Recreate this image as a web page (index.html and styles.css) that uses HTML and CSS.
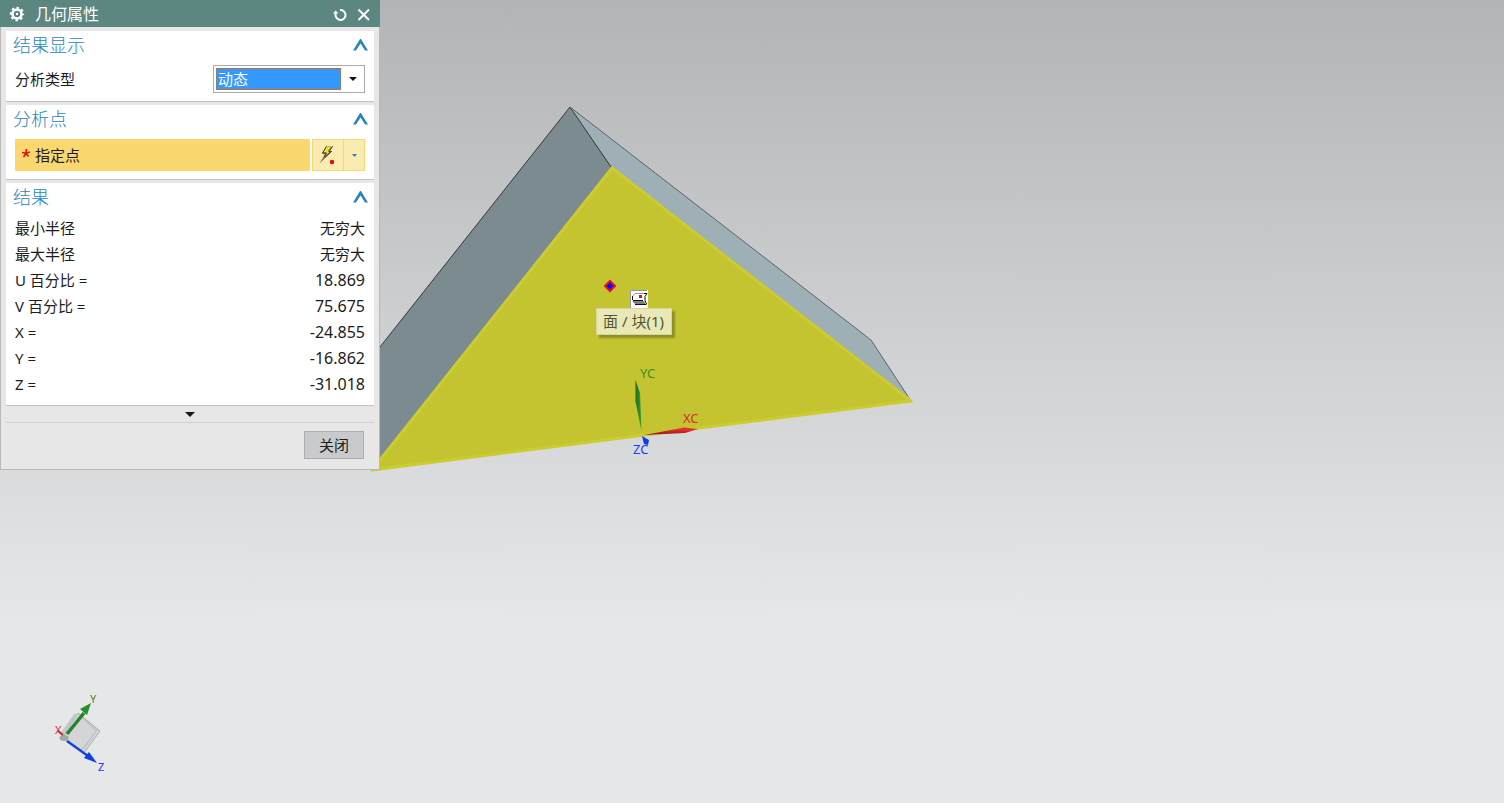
FILE: index.html
```
<!DOCTYPE html>
<html lang="zh-CN">
<head>
<meta charset="utf-8">
<title>几何属性</title>
<link rel="stylesheet" href="styles.css">
</head>
<body>
<main class="viewport">
  <svg class="scene" role="img" aria-label="块(1)">
    <defs>
      <linearGradient id="red" x1="0" y1="0" x2="0" y2="1"><stop offset=".3" stop-color="#e53030"/><stop offset="1" stop-color="#8c1515"/></linearGradient>
      <linearGradient id="green" x1="0" y1="0" x2="1" y2="0"><stop offset="0" stop-color="#1d6a1f"/><stop offset="1" stop-color="#35a035"/></linearGradient>
    </defs>
    <path d="M570 107 353 381 372 470 612 167Z" fill="#7c8b8f"/>
    <path d="M570 107 871 340 911 401 612 167Z" fill="#9fafb6"/>
    <path d="M353 381 570 107 611 167" fill="none" stroke="#333a3c"/>
    <path d="M570 107 871 340 911 401" fill="none" stroke="#59666a"/>
    <path d="M612 168 911 401 372 470Z" fill="#c4c430" stroke="#cccc30" stroke-width="3" stroke-linejoin="round"/>

    <path d="M610 281 615 286 610 291 605 286Z" fill="#00f" stroke="#e8101c" stroke-width="2"/>

    <path d="M635.500 380 640 393 641.500 431 635.500 401Z" fill="url(#green)"/>
    <path d="M644 435 684 427.500 698 429 685 433Z" fill="url(#red)"/>
    <path d="M642 436 649 440 648 445 644 444Z" fill="#0b3fe0"/>
    <text class="axis axis-y" x="640" y="378">YC</text>
    <text class="axis axis-x" x="683" y="423">XC</text>
    <text class="axis axis-z" x="633" y="454">ZC</text>

    <g stroke-linejoin="round">
      <path d="M78 713 100 731 84 753 62 738Z" fill="#d3d5d6" stroke="#aaacae"/>
      <path d="M81 717 97 731M97 730 82 750" stroke="#b2b4b6" fill="none"/>
      <path d="M76 714 61 735" stroke="#c4c6c8" stroke-width="3"/>
      <ellipse cx="64" cy="738" rx="4.500" ry="3" fill="#a4a6a8"/>
      <path d="M58 731 63 735" stroke="#c02020" stroke-width="2"/>
      <path d="M67 734 84 713" stroke="#23852a" stroke-width="3.500"/>
      <path d="M91 703 80 709 87 715Z" fill="#23902a"/>
      <path d="M67 741 88 756" stroke="#1245d4" stroke-width="2.500"/>
      <path d="M97 763 84 758 89 752Z" fill="#0b3fe8"/>
    </g>
    <text class="tiny axis-y" x="90" y="703">Y</text>
    <text class="tiny axis-x" x="55" y="734">X</text>
    <text class="tiny axis-z" x="98" y="771">Z</text>
  </svg>

  <svg class="face-icon" width="18" height="18" viewBox="0 0 18 18" aria-hidden="true">
    <path d="M0 0H18V18H0Z" fill="#fff"/><path d="M.5 18V.5H17" fill="none" stroke="#999"/>
    <path d="M2 11H14L15.500 14H5Z" fill="#808080"/>
    <path d="M2.500 6.500 5 3.500H14" fill="none" stroke="#999"/>
    <path d="M2.500 6V10M3 10.500H13M5 14.500H16.500M14 3.500H17L15 6.500V10.500L16.500 14" fill="none" stroke="#111"/>
    <path d="M9 5H12V8H9Z" fill="#c81818"/>
  </svg>
  <div class="tooltip" role="tooltip">面 / 块(1)</div>

  <form class="dialog" aria-labelledby="dialog-title">
    <header class="titlebar">
      <svg width="16" height="16" viewBox="0 0 16 16" aria-hidden="true">
        <circle cx="8" cy="8" r="4.500" fill="none" stroke="#fff" stroke-width="2.600"/>
        <circle cx="8" cy="8" r="6.200" fill="none" stroke="#fff" stroke-width="2" stroke-dasharray="2.435" stroke-dashoffset="1.217"/>
        <circle cx="8" cy="8" r="1.200" fill="#fff"/>
      </svg>
      <h1 class="title" id="dialog-title">几何属性</h1>
      <button class="tool" type="button" aria-label="重置">
        <svg width="14" height="14" viewBox="0 0 14 14"><path d="M2.500 5.500V8A5 5 0 1 0 7 3" fill="none" stroke="#fff" stroke-width="2"/><path d="M0 6.500 2.500 3.500 5.500 6.500Z" fill="#fff"/></svg>
      </button>
      <button class="tool" type="button" aria-label="关闭对话框">
        <svg width="14" height="14" viewBox="0 0 14 14"><path d="M1.500 2.500 12 13M12 2.500 1.500 13" stroke="#fff" stroke-width="2"/></svg>
      </button>
    </header>

    <div class="content">
      <section class="group">
        <div class="group-head">
          <h2 class="group-title">结果显示</h2>
          <button class="fold" type="button" aria-label="折叠结果显示"><svg width="16" height="12" viewBox="0 0 16 12"><path d="M0 11.500 7 0H8L15 11.500H12L7.500 4.500 3 11.500Z" fill="#2a86b8"/></svg></button>
        </div>
        <div class="row">
          <label for="kind">分析类型</label>
          <div class="combo">
            <select id="kind" class="combo-select"><option>动态</option></select>
            <svg class="combo-arrow" width="8" height="4" viewBox="0 0 8 4" aria-hidden="true"><path d="M0 0H8L4 4Z" fill="#111"/></svg>
          </div>
        </div>
      </section>

      <section class="group">
        <div class="group-head">
          <h2 class="group-title">分析点</h2>
          <button class="fold" type="button" aria-label="折叠分析点"><svg width="16" height="12" viewBox="0 0 16 12"><path d="M0 11.500 7 0H8L15 11.500H12L7.500 4.500 3 11.500Z" fill="#2a86b8"/></svg></button>
        </div>
        <div class="point">
          <button class="point-field" type="button"><svg width="8" height="12" viewBox="0 0 8 12" aria-hidden="true"><path d="M4.500 0 4 4.500 8 3M4 4.500 0 3.500M4 4.500 1.500 8M4 4.500 6.500 7.500" fill="none" stroke="#e01010" stroke-width="1.600"/></svg>指定点</button>
          <div class="point-tools">
            <button class="point-pick" type="button" aria-label="自动判断的点">
              <svg width="20" height="20" viewBox="0 0 20 20"><path d="M8 1.500H15L11.500 6H14L8 12 1.500 18.500 7 9H4Z" fill="#77705a"/><path d="M8.500 2H13L9.500 6.500H12L8 10 9 7.500H5.500Z" fill="#f4e52c"/><path d="M8.500 1.500 4.500 8H8L6.500 11.500M14.500 1.500 11 6.500H13.500L7 12.500" fill="none" stroke="#4b4728"/><circle cx="14" cy="17" r="2.200" fill="#e20a0a"/></svg>
            </button>
            <button class="point-more" type="button" aria-label="更多点类型">
              <svg width="5" height="3" viewBox="0 0 5 3"><path d="M0 0H5L2.500 3Z" fill="#2a7fae"/></svg>
            </button>
          </div>
        </div>
      </section>

      <section class="group">
        <div class="group-head">
          <h2 class="group-title">结果</h2>
          <button class="fold" type="button" aria-label="折叠结果"><svg width="16" height="12" viewBox="0 0 16 12"><path d="M0 11.500 7 0H8L15 11.500H12L7.500 4.500 3 11.500Z" fill="#2a86b8"/></svg></button>
        </div>
        <table class="results">
          <tbody>
            <tr><th scope="row">最小半径</th><td>无穷大</td></tr>
            <tr><th scope="row">最大半径</th><td>无穷大</td></tr>
            <tr><th scope="row">U 百分比 =</th><td class="number">18.869</td></tr>
            <tr><th scope="row">V 百分比 =</th><td class="number">75.675</td></tr>
            <tr><th scope="row">X =</th><td class="number">-24.855</td></tr>
            <tr><th scope="row">Y =</th><td class="number">-16.862</td></tr>
            <tr><th scope="row">Z =</th><td class="number">-31.018</td></tr>
          </tbody>
        </table>
      </section>
    </div>

    <button class="expand" type="button" aria-label="更多选项"><svg width="10" height="5" viewBox="0 0 10 5"><path d="M0 0H10L5 5Z" fill="#1a1a1a"/></svg></button>
    <footer class="actions"><button class="close" type="button">关闭</button></footer>
  </form>
</main>
</body>
</html>
```
FILE: styles.css
```
* { box-sizing: border-box; }

body {
  margin: 0;
  color: #1c1c1c;
  font: 15px/20px "Noto Sans", "Noto Sans CJK SC", sans-serif;
}

button {
  padding: 0;
  border: 0;
  background: none;
  color: inherit;
  font: inherit;
}

svg { display: block; }

.viewport {
  position: relative;
  min-height: 100vh;
  overflow: hidden;
  background: linear-gradient(#b3b4b6, #e6e7e9 77%);
}

/* 3D scene */
.scene {
  position: absolute;
  inset: 0;
  width: 100%;
  height: 100%;
}

.axis { font-size: 13px; }
.tiny { font-size: 11px; }
.axis-x { fill: #d42a35; }
.axis-y { fill: #3f8f20; }
.axis-z { fill: #1840f0; }

.face-icon {
  position: absolute;
  left: 630px;
  top: 290px;
}

.tooltip {
  position: absolute;
  left: 596px;
  top: 308px;
  padding: 2px 7px 3px 6px;
  border: 1px solid #d6d69a;
  background: #e9e9b8;
  box-shadow: 3px 3px 2px #8e8e28;
  color: #55552c;
}

/* Dialog */
.dialog {
  position: relative;
  display: flex;
  flex-direction: column;
  width: 380px;
  border: 1px solid #b9b9b9;
  border-top: 0;
  background: #e7e7e7;
}

.titlebar {
  display: flex;
  align-items: center;
  gap: 10px;
  height: 27px;
  margin: 0 -1px;
  padding: 0 9px;
  background: #5b8780;
  color: #fff;
}

.title {
  flex: 1;
  margin: 0;
  font-size: 16px;
  font-weight: 400;
}

.content {
  display: flex;
  flex-direction: column;
  gap: 3px;
  padding: 4px 5px 0;
}

.group {
  padding: 0 9px 8px;
  border-bottom: 1px solid #c3c3c3;
  background: #fff;
}

.group-head {
  display: flex;
  align-items: center;
  justify-content: space-between;
  height: 28px;
  margin: 0 -4px 6px -2px;
}

.group-title {
  margin: 0;
  color: #2a86b8;
  font-size: 18px;
  font-weight: 300;
}

.row {
  display: flex;
  align-items: center;
  justify-content: space-between;
}

.combo {
  position: relative;
  width: 152px;
  height: 28px;
  padding: 2px 23px 2px 2px;
  border: 1px solid #ababab;
}

.combo-select {
  display: block;
  width: 100%;
  height: 22px;
  padding: 0 1px;
  border: 1px dotted #c4692c;
  border-radius: 0;
  background: #3399ff;
  color: #fff;
  font: inherit;
  line-height: 20px;
  appearance: none;
}

.combo-arrow {
  position: absolute;
  right: 7px;
  top: 11px;
  pointer-events: none;
}

.point {
  display: flex;
  gap: 2px;
  height: 32px;
}

.point-field {
  display: flex;
  flex: 1;
  align-items: center;
  gap: 5px;
  padding-left: 7px;
  background: #fbd770;
}

.point-tools {
  display: flex;
  width: 53px;
  border: 1px solid #fbd770;
  background: #faebb0;
}

.point-pick,
.point-more {
  display: flex;
  align-items: center;
  justify-content: center;
}

.point-pick {
  width: 31px;
  border-right: 1px solid #fbd770;
}

.point-more { flex: 1; }

.results {
  width: 100%;
  margin-top: -2px;
  border-collapse: collapse;
}

.results th,
.results td {
  height: 26px;
  padding: 0;
  font-weight: 400;
  text-align: left;
}

.results td { text-align: right; }

.results .number { font-size: 16px; }

.expand {
  display: flex;
  align-items: center;
  justify-content: center;
  height: 17px;
  margin: 0 5px;
  padding: 1px 1px 0 0;
  border-bottom: 1px solid #d0d0d0;
}

.actions {
  display: flex;
  justify-content: flex-end;
  padding: 8px 15px 10px;
}

.close {
  width: 60px;
  height: 28px;
  border: 1px solid #adadad;
  background: #c9cace;
}
```
